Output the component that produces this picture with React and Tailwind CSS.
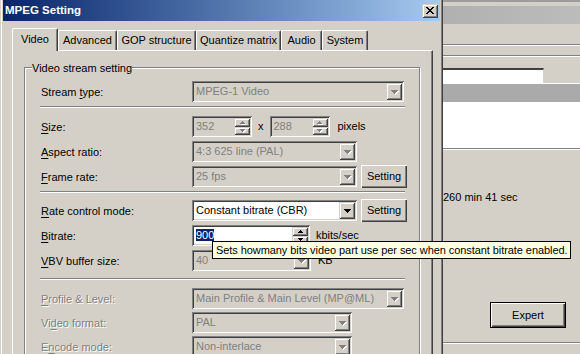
import React from 'react'

const RAISED = 'shadow-[inset_1px_1px_0_#fff,inset_-1px_-1px_0_#404040,inset_-2px_-2px_0_#808080]'
const CAPTION = 'shadow-[inset_1px_1px_0_#d4d0c8,inset_-1px_-1px_0_#404040,inset_2px_2px_0_#fff,inset_-2px_-2px_0_#808080]'
const SUNKEN = 'shadow-[inset_1px_1px_0_#808080,inset_-1px_-1px_0_#fff,inset_2px_2px_0_#404040,inset_-2px_-2px_0_#d4d0c8]'
const GRAYTEXT = 'text-[#808080] [text-shadow:1px_1px_0_#fff]'

const DOWN = 'M0 0h7v1H0zM1 1h5v1H1zM2 2h3v1H2zM3 3h1v1H3z'
const SMALL_UP = 'M2 0h1v1H2zM1 1h3v1H1zM0 2h5v1H0z'
const SMALL_DOWN = 'M0 0h5v1H0zM1 1h3v1H1zM2 2h1v1H2z'

function Glyph({ d, w, h, disabled }) {
  return (
    <svg width={w + 1} height={h + 1} viewBox={`0 0 ${w + 1} ${h + 1}`} shapeRendering="crispEdges">
      {disabled && <path d={d} fill="#fff" transform="translate(1 1)" />}
      <path d={d} fill={disabled ? '#808080' : '#000'} />
    </svg>
  )
}

function DropBtn({ disabled }) {
  return (
    <div className={`w-[16px] h-[17px] shrink-0 flex items-center justify-center pl-px pt-px bg-[#d4d0c8] ${CAPTION}`}>
      <Glyph d={DOWN} w={7} h={4} disabled={disabled} />
    </div>
  )
}

function SpinBtns({ disabled }) {
  return (
    <div className="w-[16px] h-[17px] shrink-0 flex flex-col">
      <div className={`h-[9px] flex items-center justify-center pl-px bg-[#d4d0c8] ${CAPTION}`}>
        <Glyph d={SMALL_UP} w={5} h={3} disabled={disabled} />
      </div>
      <div className={`h-[8px] flex items-center justify-center pl-px bg-[#d4d0c8] ${CAPTION}`}>
        <Glyph d={SMALL_DOWN} w={5} h={3} disabled={disabled} />
      </div>
    </div>
  )
}

function Field({ width, disabled, spin, children }) {
  return (
    <div className={`${width} h-[21px] shrink-0 flex items-center p-[2px] ${SUNKEN} ${disabled ? 'bg-[#d4d0c8] text-[#808080]' : 'bg-white text-black'}`}>
      <div className="flex-1 pl-[2px] whitespace-nowrap overflow-hidden leading-[13px]">{children}</div>
      {spin ? <SpinBtns disabled={disabled} /> : <DropBtn disabled={disabled} />}
    </div>
  )
}

function SettingBtn() {
  return (
    <div className={`ml-[4px] w-[46px] h-[23px] shrink-0 flex items-center justify-center bg-[#d4d0c8] ${RAISED}`}>
      Setting
    </div>
  )
}

function Row({ label, disabled, className = '', children }) {
  return (
    <div className={`flex items-center h-[21px] ${className}`}>
      <div className={`w-[151px] shrink-0 whitespace-nowrap pt-px ${disabled ? GRAYTEXT : ''}`}>{label}</div>
      {children}
    </div>
  )
}

function Sep({ className }) {
  return <div className={`-ml-px w-[365px] h-[2px] border-t border-t-[#808080] border-b border-b-white ${className}`} />
}

const U = ({ children }) => <span className="underline underline-offset-[2px]">{children}</span>

const tabs = [
  { name: 'Video', w: 'w-[46px]', active: true },
  { name: 'Advanced', w: 'w-[59px]' },
  { name: 'GOP structure', w: 'w-[79px]' },
  { name: 'Quantize matrix', w: 'w-[85px]' },
  { name: 'Audio', w: 'w-[41px]' },
  { name: 'System', w: 'w-[46px]' },
]

export default function App() {
  return (
    <div className="relative w-[580px] h-[354px] overflow-hidden flex bg-[#d4d0c8] text-[11px] text-black font-['Liberation_Sans',Arial,sans-serif] select-none">
      {/* dialog */}
      <div className="w-[443px] h-full shrink-0 bg-[#d4d0c8] pl-px border-r border-r-[#404040]">
        <div className="h-full border-l border-l-white border-r border-r-[#808080] px-px">
          <div className="h-[21px] flex items-center justify-between pl-[2px] pr-[2px] bg-linear-to-r from-[#0a246a] to-[#a6caf0]">
            <span className="text-white font-bold text-[11.5px]">MPEG Setting</span>
            <div className={`w-[16px] h-[14px] flex items-center justify-center bg-[#d4d0c8] ${CAPTION}`}>
              <svg width="8" height="7" viewBox="0 0 8 7" shapeRendering="crispEdges">
                <path d="M0 0h2v1H0zM6 0h2v1H6zM1 1h2v1H1zM5 1h2v1H5zM2 2h4v1H2zM3 3h2v1H3zM2 4h4v1H2zM1 5h2v1H1zM5 5h2v1H5zM0 6h2v1H0zM6 6h2v1H6z" fill="#000" />
              </svg>
            </div>
          </div>

          {/* tabs */}
          <div className="ml-[9px] mt-[7px] h-[22px] flex items-end">
            {tabs.map((t) => (
              <div
                key={t.name}
                className={`${t.w} shrink-0 flex items-center justify-center bg-[#d4d0c8] border-l border-t border-white border-r border-r-[#404040] rounded-t-[2px] shadow-[inset_-1px_0_0_#808080] ${t.active ? 'relative z-10 h-[23px] -mb-px pb-[2px]' : 'h-[20px]'}`}
              >
                {t.name}
              </div>
            ))}
          </div>

          {/* tab panel */}
          <div className="ml-[9px] w-[421px] h-[320px] border-t border-l border-white border-r border-r-[#404040] shadow-[inset_-1px_0_0_#808080]">
            <div className="mt-[16px] ml-[11px] w-[396px] h-[320px] border border-[#808080] shadow-[1px_1px_0_#fff,inset_1px_1px_0_#fff]">
              <div className="-mt-[7px] ml-[7px] w-fit bg-[#d4d0c8] leading-[13px] pt-px">Video stream setting</div>

              <div className="pl-[16px]">
                <Row label={<>Stream <U>t</U>ype:</>} className="mt-[6px]">
                  <Field width="w-[212px]" disabled>MPEG-1 Video</Field>
                </Row>
                <Sep className="mt-[4px]" />
                <Row label={<><U>S</U>ize:</>} className="mt-[8px]">
                  <Field width="w-[60px]" disabled spin>352</Field>
                  <span className="ml-[6px]">x</span>
                  <div className="ml-[6px]">
                    <Field width="w-[60px]" disabled spin>288</Field>
                  </div>
                  <span className="ml-[8px]">pixels</span>
                </Row>
                <Row label={<><U>A</U>spect ratio:</>} className="mt-[4px]">
                  <Field width="w-[165px]" disabled>4:3 625 line (PAL)</Field>
                </Row>
                <Row label={<><U>F</U>rame rate:</>} className="mt-[4px]">
                  <Field width="w-[165px]" disabled>25 fps</Field>
                  <SettingBtn />
                </Row>
                <Sep className="mt-[4px]" />
                <Row label={<><U>R</U>ate control mode:</>} className="mt-[7px]">
                  <Field width="w-[165px]">Constant bitrate (CBR)</Field>
                  <SettingBtn />
                </Row>
                <Row label={<><U>B</U>itrate:</>} className="mt-[4px]">
                  <Field width="w-[118px]" spin>
                    <span className="bg-[#0a246a] text-white">900</span>
                  </Field>
                  <span className="ml-[6px]">kbits/sec</span>
                </Row>
                <Row label={<><U>V</U>BV buffer size:</>} className="mt-[4px]">
                  <Field width="w-[119px]" disabled>40</Field>
                  <span className="ml-[7px]">KB</span>
                </Row>
                <Sep className="mt-[7px]" />
                <Row label={<><U>P</U>rofile &amp; Level:</>} disabled className="mt-[8px]">
                  <Field width="w-[212px]" disabled>Main Profile &amp; Main Level (MP@ML)</Field>
                </Row>
                <Row label={<>Vi<U>d</U>eo format:</>} disabled className="mt-[3px]">
                  <Field width="w-[160px]" disabled>PAL</Field>
                </Row>
                <Row label={<>E<U>n</U>code mode:</>} disabled className="mt-[3px]">
                  <Field width="w-[160px]" disabled>Non-interlace</Field>
                </Row>
              </div>
            </div>
          </div>
        </div>
      </div>

      {/* window behind the dialog */}
      <div className="flex-1 h-full flex flex-col bg-[#d4d0c8]">
        <div className="h-[2px] bg-[#9c9c9c]" />
        <div className="h-[4px]" />
        <div className="h-[18px] bg-linear-to-r from-[#b0b0b0] to-[#bcbcbc]" />
        <div className="h-[20px]" />
        <div className="h-[2px] border-t border-t-[#808080] border-b border-b-white" />
        <div className="h-[9px]" />
        <div className="h-[2px] border-t border-t-[#808080] border-b border-b-white" />
        <div className="h-[11px]" />
        <div className="h-[15px] flex">
          <div className="w-[101px] bg-white border-t-2 border-t-[#404040] border-r border-r-[#d4d0c8]" />
        </div>
        <div className="h-px bg-white" />
        <div className="h-[18px] bg-[#aaaaaa]" />
        <div className="h-[46px] bg-white" />
        <div className="h-[2px] border-t border-t-[#808080] border-b border-b-white" />
        <div className="mt-[41px] leading-[13px] whitespace-nowrap">260 min 41 sec</div>
        <div className="mt-[98px] ml-[47px] w-[76px] h-[26px] border border-black">
          <div className={`h-full flex items-center justify-center ${RAISED}`}>Expert</div>
        </div>
        <div className="mt-[14px] h-[2px] border-t border-t-[#808080] border-b border-b-white" />
      </div>

      {/* tooltip */}
      <div className="absolute left-[212px] top-[241px] w-[359px] h-[18px] pl-[3px] bg-[#ffffe1] border border-black leading-[16px] whitespace-nowrap overflow-hidden tracking-[-0.07px]">
        Sets howmany bits video part use per sec when constant bitrate enabled.
      </div>
    </div>
  )
}
